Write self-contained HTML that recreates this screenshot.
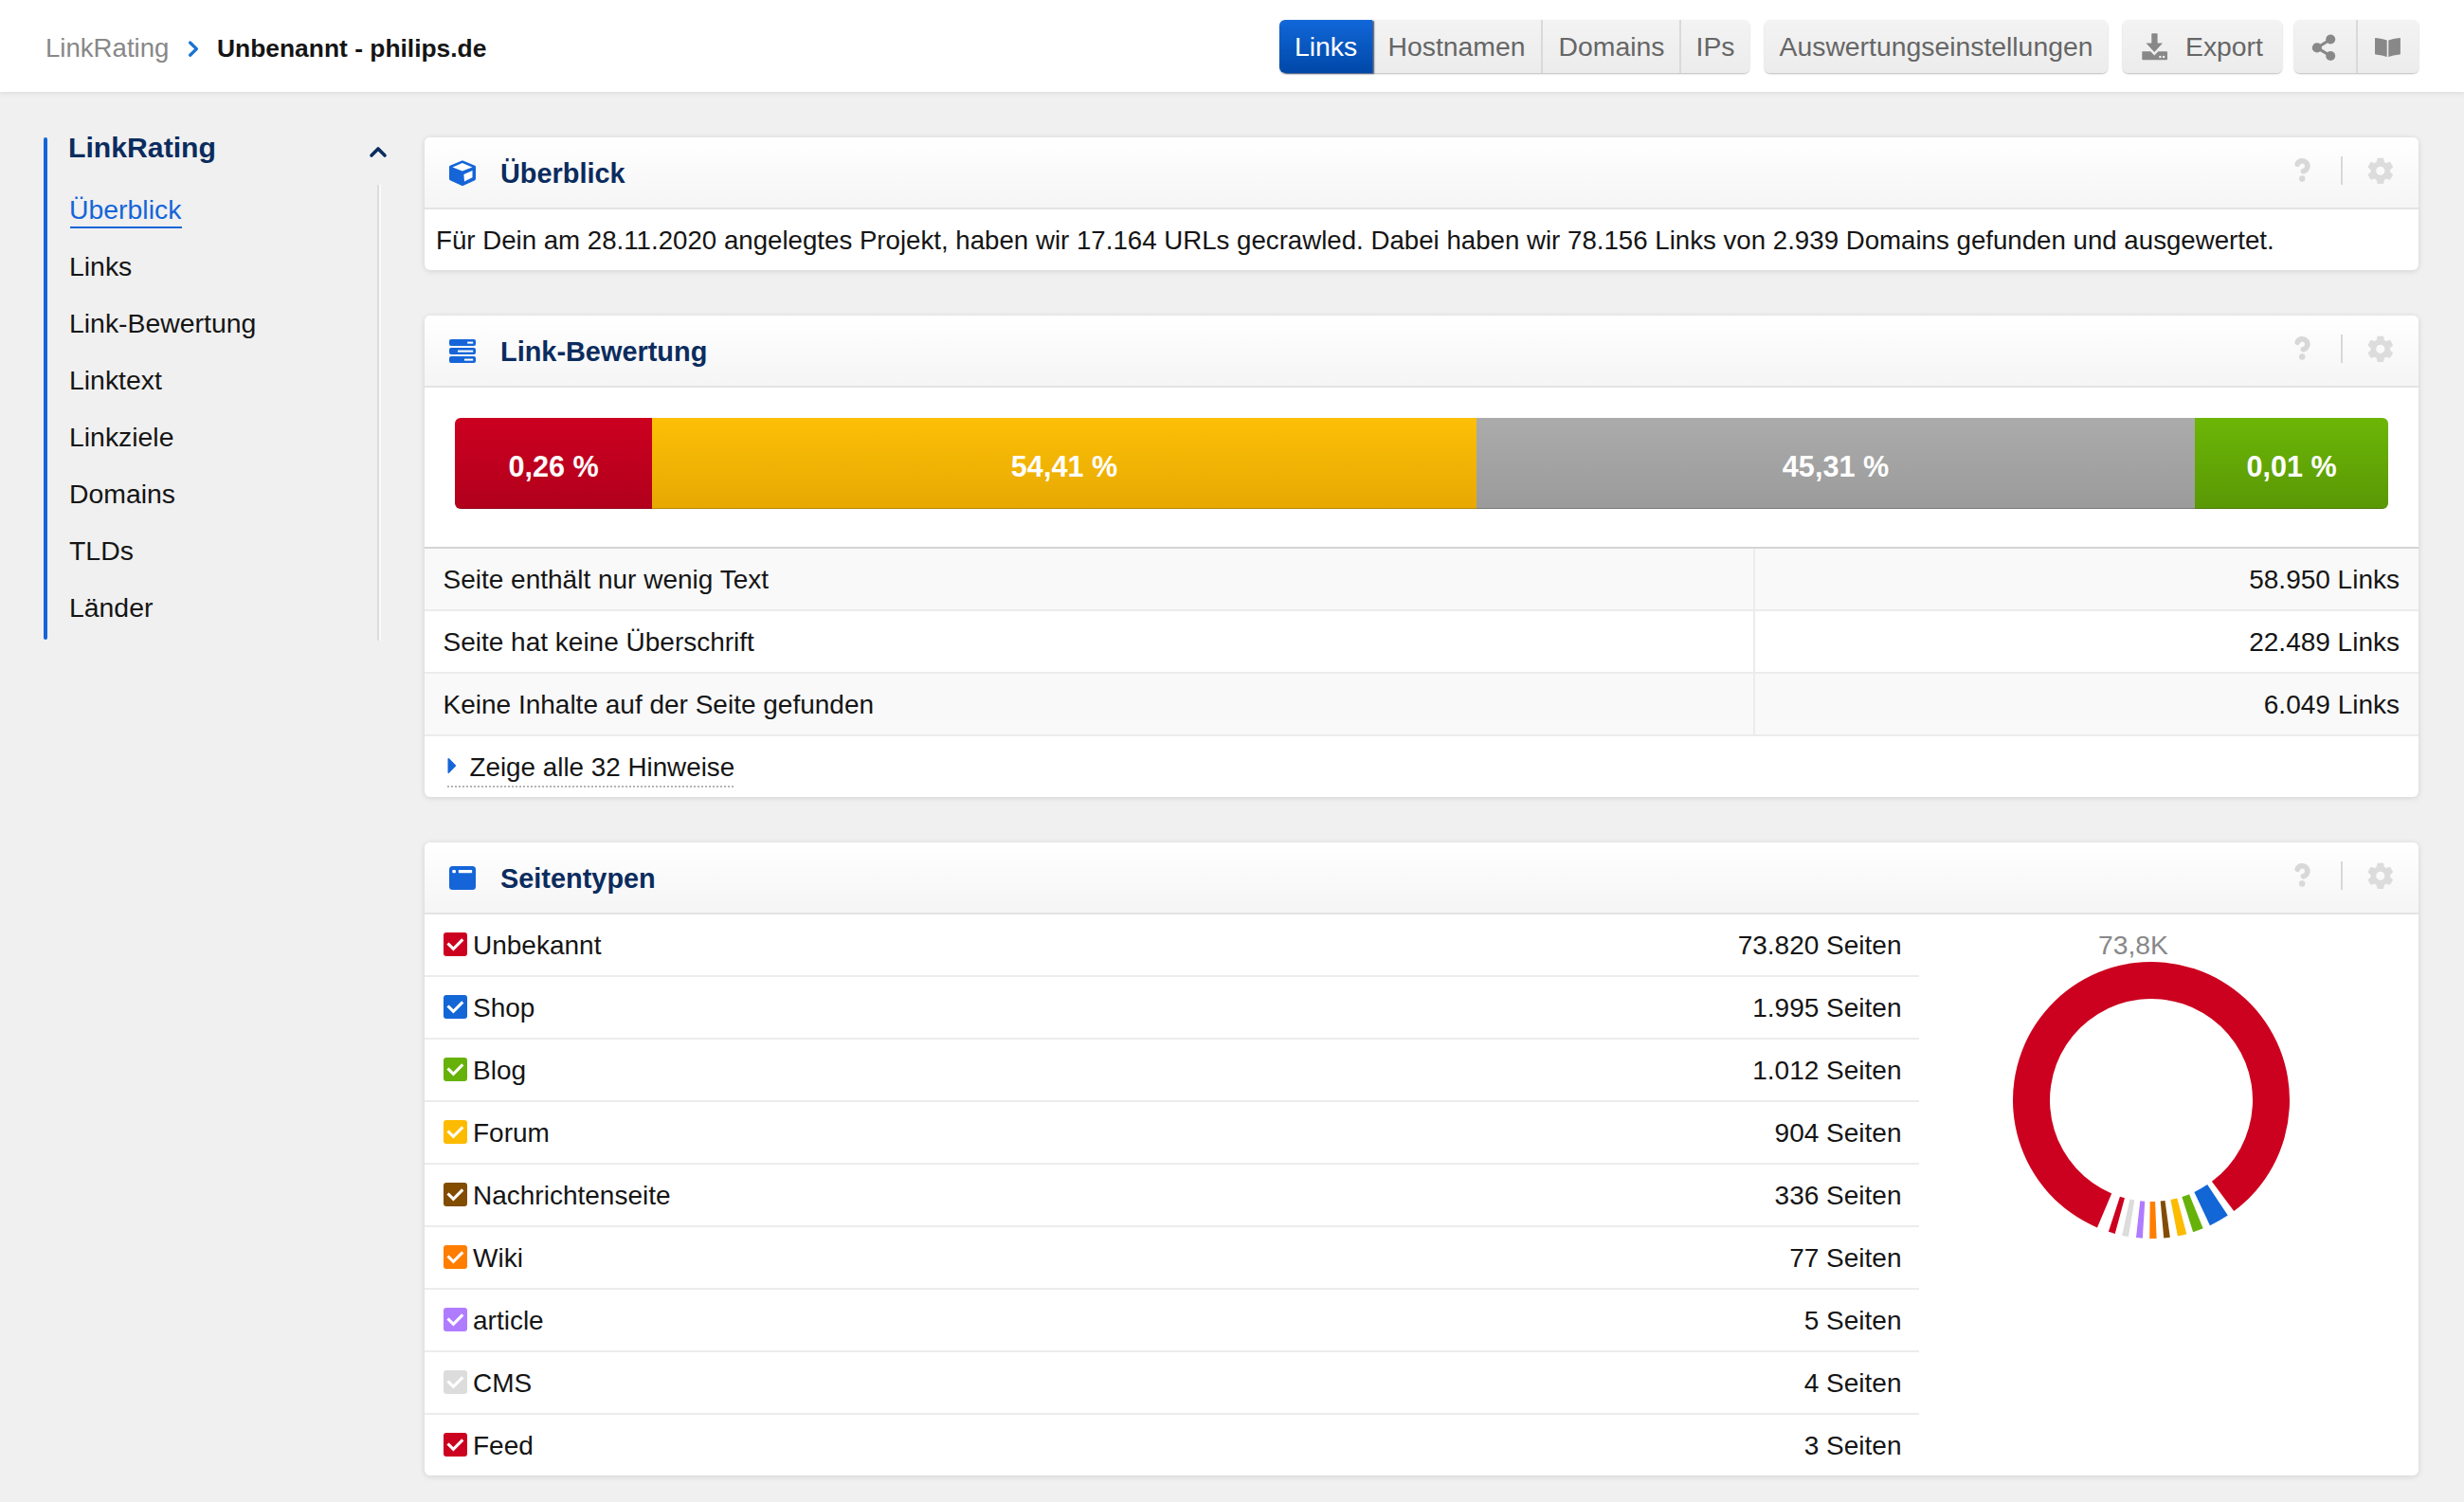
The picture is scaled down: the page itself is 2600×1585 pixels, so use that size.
<!DOCTYPE html>
<html><head><meta charset="utf-8">
<style>
*{box-sizing:border-box;margin:0;padding:0}
html,body{width:2600px;height:1585px;overflow:hidden}
body{background:#f0f0f0;font-family:"Liberation Sans",sans-serif;color:#151515;position:relative}
.a{position:absolute;white-space:nowrap}
.t28{font-size:28px;line-height:40px}
#hdr{position:absolute;left:0;top:0;width:2600px;height:97px;background:#fff;box-shadow:0 1px 5px rgba(0,0,0,.10)}
.btn{position:absolute;top:21px;height:56px;background:linear-gradient(#f3f3f3,#ececec);border-radius:6px;box-shadow:0 1px 2px rgba(0,0,0,.28);color:#666;font-size:28.35px;line-height:56px}
.seg{position:absolute;top:0;height:56px;text-align:center}
.seg.div{border-left:2px solid #d9d9d9}
.panel{position:absolute;left:448px;width:2104px;background:#fff;border-radius:6px;box-shadow:0 1px 6px rgba(0,0,0,.13);overflow:hidden}
.ph{position:absolute;left:0;top:0;width:100%;height:76px;background:linear-gradient(#fff,#f5f5f5);border-bottom:2px solid #e3e3e3}
.ptitle{position:absolute;left:80px;top:18px;font-size:28.9px;line-height:40px;font-weight:700;color:#0b2c5e}
.pico{position:absolute;left:26px}
.help{position:absolute;left:1970px;top:20px}
.vdiv{position:absolute;left:2022px;top:20px;width:2px;height:30px;background:#d8d8d8}
.gear{position:absolute;left:2050px;top:21px}
.row{position:absolute;left:0;height:66px;border-bottom:2px solid #ececec}
.row .l{position:absolute;left:19.5px;top:13px;font-size:28px;line-height:40px}
.row .r{position:absolute;right:20px;top:13px;font-size:28px;line-height:40px;text-align:right}
.cb{position:absolute;left:20px;top:19px;width:24.5px;height:24.5px;border-radius:3px}
.cb svg{position:absolute;left:0;top:0}
.nav{position:absolute;left:73px;font-size:28.4px;line-height:40px;color:#151515}
</style></head><body>

<!-- HEADER -->
<div id="hdr">
  <div class="a" style="left:48px;top:31px;font-size:27.6px;line-height:40px;color:#888">LinkRating</div>
  <svg class="a" style="left:196px;top:40px" width="16" height="23" viewBox="0 0 16 23"><path d="M4.6 5 L11.4 11.6 L4.6 18.2" fill="none" stroke="#1a73d0" stroke-width="3.3" stroke-linecap="round" stroke-linejoin="round"/></svg>
  <div class="a" style="left:229px;top:31px;font-size:26.4px;line-height:40px;font-weight:700;color:#151515">Unbenannt - philips.de</div>

  <div class="btn" style="left:1350px;width:496px">
    <div class="seg" style="left:0;width:98px;background:linear-gradient(#1167d8,#0048a8);color:#fff;border-radius:6px 0 0 6px;box-shadow:2px 1px 1.5px rgba(10,40,90,.75);z-index:1">Links</div>
    <div class="seg" style="left:98px;width:178px">Hostnamen</div>
    <div class="seg div" style="left:276px;width:147px">Domains</div>
    <div class="seg div" style="left:422px;width:74px">IPs</div>
  </div>
  <div class="btn" style="left:1862px;width:362px;text-align:center">Auswertungseinstellungen</div>
  <div class="btn" style="left:2240px;width:168px">
    <svg class="a" style="left:19px;top:13px" width="30" height="30" viewBox="0 0 30 30">
      <path d="M11.3 1.9 Q11.3 1.3 11.9 1.3 H17 Q17.6 1.3 17.6 1.9 V11.4 H23 L14.3 21 L5.5 11.4 H11.3z" fill="#888"/>
      <path d="M1.3 20.9 Q1.3 20.2 2 20.2 H10.2 L14.3 24.6 L18.4 20.2 H27.3 Q28 20.2 28 20.9 V28.4 Q28 29.2 27.2 29.2 H2.1 Q1.3 29.2 1.3 28.4z" fill="#888"/>
      <rect x="19.3" y="24.9" width="2.2" height="2.2" fill="#f0f0f0"/><rect x="23" y="24.9" width="2.2" height="2.2" fill="#f0f0f0"/>
    </svg>
    <div class="a" style="left:66px;top:0;line-height:56px">Export</div>
  </div>
  <div class="btn" style="left:2421px;width:131px">
    <svg class="a" style="left:18px;top:15px" width="28" height="29" viewBox="0 0 28 29">
      <circle cx="20.2" cy="5.5" r="5" fill="#888"/><circle cx="5.9" cy="14.4" r="5.1" fill="#888"/><circle cx="20.2" cy="23" r="5" fill="#888"/>
      <path d="M20.2 5.5 L5.9 14.4 L20.2 23" fill="none" stroke="#888" stroke-width="3.2"/>
    </svg>
    <div class="a" style="left:65px;top:0;width:2px;height:56px;background:#d9d9d9"></div>
    <svg class="a" style="left:84px;top:18px" width="30" height="23" viewBox="0 0 30 23">
      <path d="M1 1.6 Q1 0.8 1.8 0.9 Q9 1.6 13.7 3.6 V21 Q9 19.2 1.8 18.6 Q1 18.5 1 17.8z" fill="#888"/>
      <path d="M27.9 1.6 Q27.9 0.8 27.1 0.9 Q19.9 1.6 15.3 3.6 V21 Q19.9 19.2 27.1 18.6 Q27.9 18.5 27.9 17.8z" fill="#888"/>
    </svg>
  </div>
</div>

<!-- SIDEBAR -->
<div class="a" style="left:46px;top:145px;width:4px;height:530px;background:#1565d8;border-radius:2px"></div>
<div class="a" style="left:72px;top:136px;font-size:30.2px;line-height:40px;font-weight:700;color:#0b2c5e">LinkRating</div>
<svg class="a" style="left:386px;top:150px" width="26" height="20" viewBox="0 0 26 20"><path d="M6 14 L13 7 L20 14" fill="none" stroke="#0b2c5e" stroke-width="3.6" stroke-linecap="round" stroke-linejoin="round"/></svg>
<div class="a" style="left:398px;top:195px;width:2px;height:481px;background:#dcdcdc"></div>
<div class="a" style="left:400px;top:195px;width:2px;height:481px;background:#fafafa"></div>
<div class="nav" style="top:201px;color:#1565d8">Überblick</div>
<div class="a" style="left:74px;top:239px;width:118px;height:2px;background:#1565d8"></div>
<div class="nav" style="top:261px">Links</div>
<div class="nav" style="top:321px">Link-Bewertung</div>
<div class="nav" style="top:381px">Linktext</div>
<div class="nav" style="top:441px">Linkziele</div>
<div class="nav" style="top:501px">Domains</div>
<div class="nav" style="top:561px">TLDs</div>
<div class="nav" style="top:621px">Länder</div>

<!-- PANEL 1 -->
<div class="panel" style="top:145px;height:140px">
  <div class="ph">
    <svg class="pico" style="top:23px" width="28" height="30" viewBox="0 0 28 30">
      <path d="M14 2.9 L26.5 8.2 V20.8 L14 26.6 L1.5 20.8 V8.2z" fill="#1565d8" stroke="#1565d8" stroke-width="3" stroke-linejoin="round"/>
      <path d="M3.5 8.5 L13.8 4 L24.4 8.5 L13.8 12.6z" fill="#fff"/>
      <path d="M15.4 16.1 L24.5 12.1 V19.3 L16 23.4z" fill="#fff"/>
    </svg>
    <div class="ptitle">Überblick</div>
    <svg class="a" style="left:1968px;top:18px" width="26" height="32" viewBox="0 0 26 32"><path d="M8.2 10.24 A5.5 5.5 0 1 1 14.4 17.7" fill="none" stroke="#d8d8d8" stroke-width="5.6" stroke-linecap="round"/><circle cx="13.2" cy="25.5" r="3.2" fill="#d8d8d8"/></svg>
    <div class="vdiv"></div>
    <svg class="a" style="left:2049px;top:21px" width="30" height="30" viewBox="0 0 30 30"><circle cx="14.8" cy="14.3" r="7.5" fill="none" stroke="#dcdcdc" stroke-width="5.8"/><path d="M10.600000000000001 4.800000000000001 L11.700000000000001 0.7000000000000011 H17.900000000000002 L19.0 4.800000000000001z" fill="#dcdcdc" transform="rotate(0 14.8 14.3)"/><path d="M10.600000000000001 4.800000000000001 L11.700000000000001 0.7000000000000011 H17.900000000000002 L19.0 4.800000000000001z" fill="#dcdcdc" transform="rotate(60 14.8 14.3)"/><path d="M10.600000000000001 4.800000000000001 L11.700000000000001 0.7000000000000011 H17.900000000000002 L19.0 4.800000000000001z" fill="#dcdcdc" transform="rotate(120 14.8 14.3)"/><path d="M10.600000000000001 4.800000000000001 L11.700000000000001 0.7000000000000011 H17.900000000000002 L19.0 4.800000000000001z" fill="#dcdcdc" transform="rotate(180 14.8 14.3)"/><path d="M10.600000000000001 4.800000000000001 L11.700000000000001 0.7000000000000011 H17.900000000000002 L19.0 4.800000000000001z" fill="#dcdcdc" transform="rotate(240 14.8 14.3)"/><path d="M10.600000000000001 4.800000000000001 L11.700000000000001 0.7000000000000011 H17.900000000000002 L19.0 4.800000000000001z" fill="#dcdcdc" transform="rotate(300 14.8 14.3)"/></svg>
  </div>
  <div class="a" style="left:12px;top:89px;font-size:27.67px;line-height:40px">Für Dein am 28.11.2020 angelegtes Projekt, haben wir 17.164 URLs gecrawled. Dabei haben wir 78.156 Links von 2.939 Domains gefunden und ausgewertet.</div>
</div>

<!-- PANEL 2 -->
<div class="panel" style="top:333px;height:508px">
  <div class="ph">
    <svg class="pico" style="top:25px" width="28" height="25" viewBox="0 0 28 25">
      <rect x="0" y="0" width="28" height="7" rx="2" fill="#1565d8"/>
      <rect x="0" y="9" width="28" height="7" rx="2" fill="#1565d8"/>
      <rect x="0" y="18" width="28" height="7" rx="2" fill="#1565d8"/>
      <rect x="19.2" y="2.6" width="6" height="2" fill="#fff"/>
      <rect x="9" y="11.6" width="16.2" height="2" fill="#fff"/>
      <rect x="16" y="20.6" width="9.2" height="2" fill="#fff"/>
    </svg>
    <div class="ptitle">Link-Bewertung</div>
    <svg class="a" style="left:1968px;top:18px" width="26" height="32" viewBox="0 0 26 32"><path d="M8.2 10.24 A5.5 5.5 0 1 1 14.4 17.7" fill="none" stroke="#d8d8d8" stroke-width="5.6" stroke-linecap="round"/><circle cx="13.2" cy="25.5" r="3.2" fill="#d8d8d8"/></svg>
    <div class="vdiv"></div>
    <svg class="a" style="left:2049px;top:21px" width="30" height="30" viewBox="0 0 30 30"><circle cx="14.8" cy="14.3" r="7.5" fill="none" stroke="#dcdcdc" stroke-width="5.8"/><path d="M10.600000000000001 4.800000000000001 L11.700000000000001 0.7000000000000011 H17.900000000000002 L19.0 4.800000000000001z" fill="#dcdcdc" transform="rotate(0 14.8 14.3)"/><path d="M10.600000000000001 4.800000000000001 L11.700000000000001 0.7000000000000011 H17.900000000000002 L19.0 4.800000000000001z" fill="#dcdcdc" transform="rotate(60 14.8 14.3)"/><path d="M10.600000000000001 4.800000000000001 L11.700000000000001 0.7000000000000011 H17.900000000000002 L19.0 4.800000000000001z" fill="#dcdcdc" transform="rotate(120 14.8 14.3)"/><path d="M10.600000000000001 4.800000000000001 L11.700000000000001 0.7000000000000011 H17.900000000000002 L19.0 4.800000000000001z" fill="#dcdcdc" transform="rotate(180 14.8 14.3)"/><path d="M10.600000000000001 4.800000000000001 L11.700000000000001 0.7000000000000011 H17.900000000000002 L19.0 4.800000000000001z" fill="#dcdcdc" transform="rotate(240 14.8 14.3)"/><path d="M10.600000000000001 4.800000000000001 L11.700000000000001 0.7000000000000011 H17.900000000000002 L19.0 4.800000000000001z" fill="#dcdcdc" transform="rotate(300 14.8 14.3)"/></svg>
  </div>
  <div class="a" style="left:32px;top:108px;width:2040px;height:96px;border-radius:6px;overflow:hidden;color:#fff;font-weight:700;font-size:30.6px;line-height:103px;text-align:center">
    <div class="a" style="left:0;top:0;width:208px;height:96px;background:linear-gradient(#cc0020,#b1001c);border-bottom:1px solid #8e0016">0,26 %</div>
    <div class="a" style="left:208px;top:0;width:870px;height:96px;background:linear-gradient(#fdbf06,#e7a902);border-bottom:1px solid #b98700">54,41 %</div>
    <div class="a" style="left:1078px;top:0;width:758px;height:96px;background:linear-gradient(#ababab,#9b9b9b);border-bottom:1px solid #777">45,31 %</div>
    <div class="a" style="left:1836px;top:0;width:204px;height:96px;background:linear-gradient(#6cb607,#5a9805);border-bottom:1px solid #477a04">0,01 %</div>
  </div>
  <div class="a" style="left:0;top:244px;width:2104px;height:2px;background:#d4d4d4"></div>
  <div class="row" style="top:246px;width:2104px;background:#f9f9f9"><div class="l">Seite enthält nur wenig Text</div><div class="r">58.950 Links</div></div>
  <div class="row" style="top:312px;width:2104px"><div class="l">Seite hat keine Überschrift</div><div class="r">22.489 Links</div></div>
  <div class="row" style="top:378px;width:2104px;background:#f9f9f9"><div class="l">Keine Inhalte auf der Seite gefunden</div><div class="r">6.049 Links</div></div>
  <div class="a" style="left:1402px;top:246px;width:2px;height:198px;background:#ececec"></div>
  <svg class="a" style="left:24px;top:466px" width="12" height="18" viewBox="0 0 12 18"><path d="M1.3 1.8 L8.4 9 L1.3 16.2z" fill="#1565d8" stroke="#1565d8" stroke-width="1.6" stroke-linejoin="round"/></svg>
  <div class="a" style="left:47.5px;top:457px;font-size:27.8px;line-height:40px">Zeige alle 32 Hinweise</div>
  <div class="a" style="left:24px;top:496px;width:302px;height:0;border-top:2px dotted #b5b5b5"></div>
</div>

<!-- PANEL 3 -->
<div class="panel" style="top:889px;height:668px">
  <div class="ph">
    <svg class="pico" style="top:25px" width="28" height="25" viewBox="0 0 28 25">
      <rect x="0" y="0" width="28" height="25" rx="3.5" fill="#1565d8"/>
      <rect x="3.3" y="4" width="3.6" height="3.2" rx="0.8" fill="#fff"/>
      <rect x="9.8" y="4" width="14.4" height="3.2" rx="0.8" fill="#fff"/>
    </svg>
    <div class="ptitle">Seitentypen</div>
    <svg class="a" style="left:1968px;top:18px" width="26" height="32" viewBox="0 0 26 32"><path d="M8.2 10.24 A5.5 5.5 0 1 1 14.4 17.7" fill="none" stroke="#d8d8d8" stroke-width="5.6" stroke-linecap="round"/><circle cx="13.2" cy="25.5" r="3.2" fill="#d8d8d8"/></svg>
    <div class="vdiv"></div>
    <svg class="a" style="left:2049px;top:21px" width="30" height="30" viewBox="0 0 30 30"><circle cx="14.8" cy="14.3" r="7.5" fill="none" stroke="#dcdcdc" stroke-width="5.8"/><path d="M10.600000000000001 4.800000000000001 L11.700000000000001 0.7000000000000011 H17.900000000000002 L19.0 4.800000000000001z" fill="#dcdcdc" transform="rotate(0 14.8 14.3)"/><path d="M10.600000000000001 4.800000000000001 L11.700000000000001 0.7000000000000011 H17.900000000000002 L19.0 4.800000000000001z" fill="#dcdcdc" transform="rotate(60 14.8 14.3)"/><path d="M10.600000000000001 4.800000000000001 L11.700000000000001 0.7000000000000011 H17.900000000000002 L19.0 4.800000000000001z" fill="#dcdcdc" transform="rotate(120 14.8 14.3)"/><path d="M10.600000000000001 4.800000000000001 L11.700000000000001 0.7000000000000011 H17.900000000000002 L19.0 4.800000000000001z" fill="#dcdcdc" transform="rotate(180 14.8 14.3)"/><path d="M10.600000000000001 4.800000000000001 L11.700000000000001 0.7000000000000011 H17.900000000000002 L19.0 4.800000000000001z" fill="#dcdcdc" transform="rotate(240 14.8 14.3)"/><path d="M10.600000000000001 4.800000000000001 L11.700000000000001 0.7000000000000011 H17.900000000000002 L19.0 4.800000000000001z" fill="#dcdcdc" transform="rotate(300 14.8 14.3)"/></svg>
  </div>
  <div class="row" style="top:76px;width:1577px;"><div class="cb" style="background:#cc001f"><svg width="25" height="25" viewBox="0 0 25 25"><path d="M5.6 12.6 L10.4 17.3 L19.2 8.4" fill="none" stroke="#fff" stroke-width="3.1" stroke-linecap="square"/></svg></div><div class="l" style="left:51px">Unbekannt</div><div class="r" style="right:18.5px">73.820 Seiten</div></div>
<div class="row" style="top:142px;width:1577px;"><div class="cb" style="background:#1366d6"><svg width="25" height="25" viewBox="0 0 25 25"><path d="M5.6 12.6 L10.4 17.3 L19.2 8.4" fill="none" stroke="#fff" stroke-width="3.1" stroke-linecap="square"/></svg></div><div class="l" style="left:51px">Shop</div><div class="r" style="right:18.5px">1.995 Seiten</div></div>
<div class="row" style="top:208px;width:1577px;"><div class="cb" style="background:#66b20a"><svg width="25" height="25" viewBox="0 0 25 25"><path d="M5.6 12.6 L10.4 17.3 L19.2 8.4" fill="none" stroke="#fff" stroke-width="3.1" stroke-linecap="square"/></svg></div><div class="l" style="left:51px">Blog</div><div class="r" style="right:18.5px">1.012 Seiten</div></div>
<div class="row" style="top:274px;width:1577px;"><div class="cb" style="background:#fdbb00"><svg width="25" height="25" viewBox="0 0 25 25"><path d="M5.6 12.6 L10.4 17.3 L19.2 8.4" fill="none" stroke="#fff" stroke-width="3.1" stroke-linecap="square"/></svg></div><div class="l" style="left:51px">Forum</div><div class="r" style="right:18.5px">904 Seiten</div></div>
<div class="row" style="top:340px;width:1577px;"><div class="cb" style="background:#824c02"><svg width="25" height="25" viewBox="0 0 25 25"><path d="M5.6 12.6 L10.4 17.3 L19.2 8.4" fill="none" stroke="#fff" stroke-width="3.1" stroke-linecap="square"/></svg></div><div class="l" style="left:51px">Nachrichtenseite</div><div class="r" style="right:18.5px">336 Seiten</div></div>
<div class="row" style="top:406px;width:1577px;"><div class="cb" style="background:#ff7d00"><svg width="25" height="25" viewBox="0 0 25 25"><path d="M5.6 12.6 L10.4 17.3 L19.2 8.4" fill="none" stroke="#fff" stroke-width="3.1" stroke-linecap="square"/></svg></div><div class="l" style="left:51px">Wiki</div><div class="r" style="right:18.5px">77 Seiten</div></div>
<div class="row" style="top:472px;width:1577px;"><div class="cb" style="background:#b07cff"><svg width="25" height="25" viewBox="0 0 25 25"><path d="M5.6 12.6 L10.4 17.3 L19.2 8.4" fill="none" stroke="#fff" stroke-width="3.1" stroke-linecap="square"/></svg></div><div class="l" style="left:51px">article</div><div class="r" style="right:18.5px">5 Seiten</div></div>
<div class="row" style="top:538px;width:1577px;"><div class="cb" style="background:#dcdcdc"><svg width="25" height="25" viewBox="0 0 25 25"><path d="M5.6 12.6 L10.4 17.3 L19.2 8.4" fill="none" stroke="#fff" stroke-width="3.1" stroke-linecap="square"/></svg></div><div class="l" style="left:51px">CMS</div><div class="r" style="right:18.5px">4 Seiten</div></div>
<div class="row" style="top:604px;width:1577px;border-bottom:none;"><div class="cb" style="background:#cc001f"><svg width="25" height="25" viewBox="0 0 25 25"><path d="M5.6 12.6 L10.4 17.3 L19.2 8.4" fill="none" stroke="#fff" stroke-width="3.1" stroke-linecap="square"/></svg></div><div class="l" style="left:51px">Feed</div><div class="r" style="right:18.5px">3 Seiten</div></div>

  <svg class="a" style="left:0;top:0" width="2104" height="668"><path d="M1764.95 406.39 A146 146 0 1 1 1909.25 389.06 L1885.95 357.79 A107 107 0 1 0 1780.19 370.49Z" fill="#cc001f"/><path d="M1902.80 393.61 A146 146 0 0 1 1883.93 404.21 L1867.39 368.90 A107 107 0 0 0 1881.21 361.12Z" fill="#1366d6"/><path d="M1876.69 407.37 A146 146 0 0 1 1866.15 411.17 L1854.35 373.99 A107 107 0 0 0 1862.08 371.21Z" fill="#66b20a"/><path d="M1859.30 413.16 A146 146 0 0 1 1849.86 415.32 L1842.42 377.03 A107 107 0 0 0 1849.33 375.45Z" fill="#fdbb00"/><path d="M1841.81 416.65 A146 146 0 0 1 1835.23 417.40 L1831.70 378.56 A107 107 0 0 0 1836.52 378.01Z" fill="#824c02"/><path d="M1827.60 417.89 A146 146 0 0 1 1820.22 417.99 L1820.69 378.99 A107 107 0 0 0 1826.11 378.92Z" fill="#ff7d00"/><path d="M1812.83 417.71 A146 146 0 0 1 1805.98 417.12 L1810.26 378.35 A107 107 0 0 0 1815.28 378.79Z" fill="#b07cff"/><path d="M1797.90 416.00 A146 146 0 0 1 1791.15 414.70 L1799.39 376.58 A107 107 0 0 0 1804.34 377.53Z" fill="#dcdcdc"/><path d="M1783.72 412.89 A146 146 0 0 1 1776.88 410.85 L1788.94 373.76 A107 107 0 0 0 1793.95 375.26Z" fill="#cc001f"/></svg>
  <div class="a" style="left:1766px;top:88px;font-size:28.3px;line-height:40px;color:#888">73,8K</div>
</div>

</body></html>
